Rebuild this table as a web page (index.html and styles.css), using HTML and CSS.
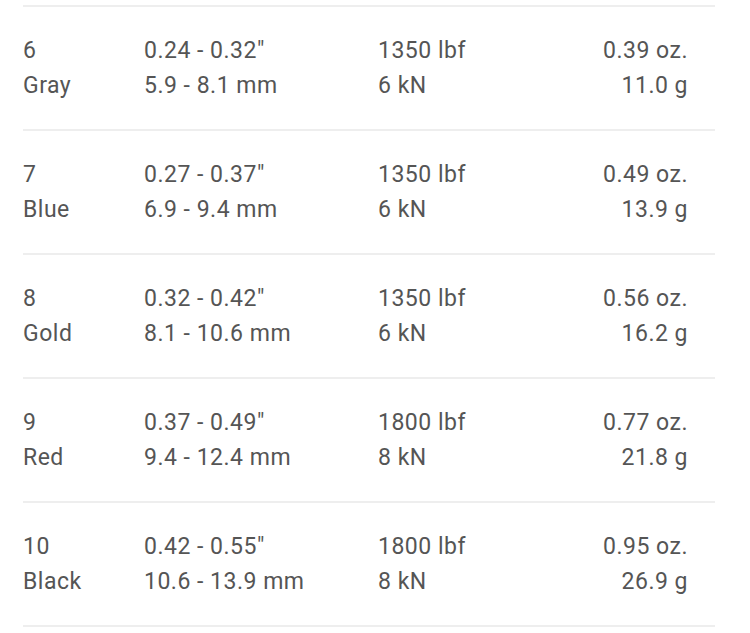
FILE: index.html
```html
<!DOCTYPE html>
<html>
<head>
<meta charset="utf-8">
<link rel="stylesheet" href="styles.css">
</head>
<body>
<div class="table">
  <div class="row">
    <div class="cell">6<br>Gray</div>
    <div class="cell">0.24 - 0.32"<br>5.9 - 8.1 mm</div>
    <div class="cell">1350 lbf<br>6 kN</div>
    <div class="cell right">0.39 oz.<br>11.0 g</div>
  </div>
  <div class="row">
    <div class="cell">7<br>Blue</div>
    <div class="cell">0.27 - 0.37"<br>6.9 - 9.4 mm</div>
    <div class="cell">1350 lbf<br>6 kN</div>
    <div class="cell right">0.49 oz.<br>13.9 g</div>
  </div>
  <div class="row">
    <div class="cell">8<br>Gold</div>
    <div class="cell">0.32 - 0.42"<br>8.1 - 10.6 mm</div>
    <div class="cell">1350 lbf<br>6 kN</div>
    <div class="cell right">0.56 oz.<br>16.2 g</div>
  </div>
  <div class="row">
    <div class="cell">9<br>Red</div>
    <div class="cell">0.37 - 0.49"<br>9.4 - 12.4 mm</div>
    <div class="cell">1800 lbf<br>8 kN</div>
    <div class="cell right">0.77 oz.<br>21.8 g</div>
  </div>
  <div class="row">
    <div class="cell">10<br>Black</div>
    <div class="cell">0.42 - 0.55"<br>10.6 - 13.9 mm</div>
    <div class="cell">1800 lbf<br>8 kN</div>
    <div class="cell right">0.95 oz.<br>26.9 g</div>
  </div>
</div>
</body>
</html>
```

FILE: styles.css
```css
html, body {
  margin: 0;
  padding: 0;
  background: #ffffff;
}

body {
  font-family: Roboto, "Noto Sans", sans-serif;
  font-size: 23px;
  letter-spacing: 0.5px;
  line-height: 35px;
  color: #555555;
}

.table {
  width: 692px;
  margin: 5px 0 0 23px;
  border-bottom: 2px solid #eeeeee;
}

.row {
  display: grid;
  grid-template-columns: 121px 234px 1fr 200px;
  border-top: 2px solid #eeeeee;
  padding: 26px 27px 26px 0;
}

.cell.right {
  text-align: right;
}
```
